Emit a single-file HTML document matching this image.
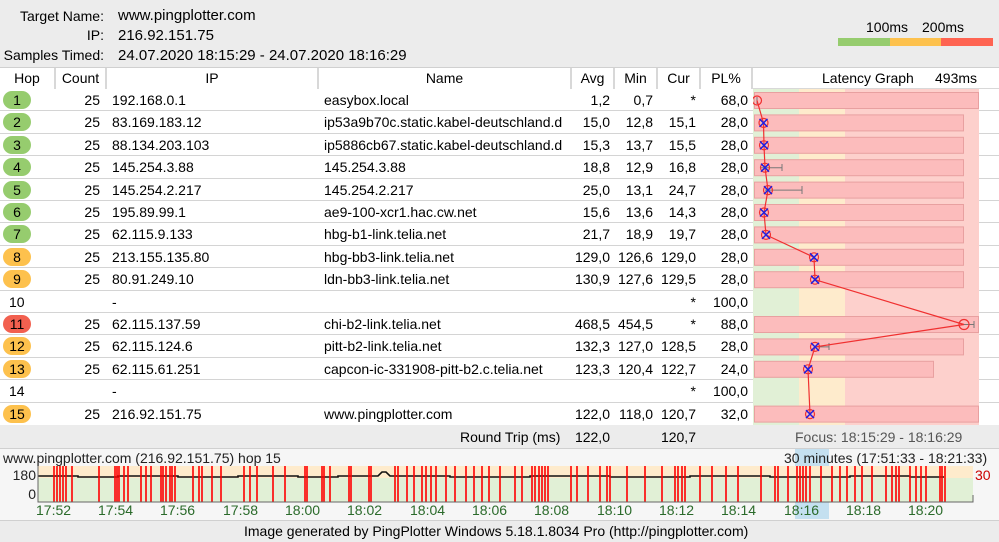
<!DOCTYPE html>
<html><head><meta charset="utf-8"><style>
*{margin:0;padding:0;box-sizing:border-box}
body{width:999px;height:542px;overflow:hidden;background:#ececec;font-family:"Liberation Sans",Verdana,sans-serif;font-size:14px;color:#000;position:relative}
.a{position:absolute;white-space:nowrap}
.r{text-align:right}
.row{position:absolute;left:0;width:999px;height:22.4px;background:#fff;border-bottom:1px solid #d4d4d4}
.row span{position:absolute;top:3px;white-space:nowrap}
.hop{position:absolute;left:3px;top:2px;width:28px;height:18px;border-radius:9px;text-align:center;line-height:18px}
.g{background:#96cc6e}.o{background:#fdc14d}.rd{background:#f2604f}
.hd{position:absolute;top:68px;height:21px;background:#fff;border-right:2px solid #d8d8d8;text-align:center;line-height:20px}
</style></head><body>
<div class="a r" style="left:0;width:104px;top:8px">Target Name:</div>
<div class="a" style="left:118px;top:7px;font-size:15px">www.pingplotter.com</div>
<div class="a r" style="left:0;width:104px;top:27px">IP:</div>
<div class="a" style="left:118px;top:27px;font-size:15px">216.92.151.75</div>
<div class="a r" style="left:0;width:104px;top:47px">Samples Timed:</div>
<div class="a" style="left:118px;top:47px;font-size:15px">24.07.2020 18:15:29 - 24.07.2020 18:16:29</div>
<div class="a" style="left:866px;top:19px">100ms</div><div class="a" style="left:922px;top:19px">200ms</div>
<div class="a" style="left:838px;top:38px;width:52px;height:8px;background:#96cc6e"></div>
<div class="a" style="left:890px;top:38px;width:51px;height:8px;background:#fdc14d"></div>
<div class="a" style="left:941px;top:38px;width:52px;height:8px;background:#fe6452"></div>
<div class="a" style="left:0;top:67px;width:999px;height:23px;background:#fff;border-top:1px solid #d0d0d0;border-bottom:2px solid #d8d8d8"></div>
<div class="hd" style="left:0;width:56px">Hop</div>
<div class="hd" style="left:56px;width:51px">Count</div>
<div class="hd" style="left:107px;width:212px">IP</div>
<div class="hd" style="left:319px;width:253px">Name</div>
<div class="hd" style="left:572px;width:43px">Avg</div>
<div class="hd" style="left:615px;width:43px">Min</div>
<div class="hd" style="left:658px;width:43px">Cur</div>
<div class="hd" style="left:701px;width:52px">PL%</div>
<div class="a" style="left:822px;top:70px">Latency Graph</div><div class="a" style="left:935px;top:70px">493ms</div>

<div class="row" style="top:89px"><div class="hop g">1</div><span class="r" style="right:899px">25</span><span style="left:112px">192.168.0.1</span><span style="left:324px">easybox.local</span><span class="r" style="right:389px">1,2</span><span class="r" style="right:346px">0,7</span><span class="r" style="right:303px">*</span><span class="r" style="right:251px">68,0</span></div>
<div class="row" style="top:111.4px"><div class="hop g">2</div><span class="r" style="right:899px">25</span><span style="left:112px">83.169.183.12</span><span style="left:324px">ip53a9b70c.static.kabel-deutschland.d</span><span class="r" style="right:389px">15,0</span><span class="r" style="right:346px">12,8</span><span class="r" style="right:303px">15,1</span><span class="r" style="right:251px">28,0</span></div>
<div class="row" style="top:133.8px"><div class="hop g">3</div><span class="r" style="right:899px">25</span><span style="left:112px">88.134.203.103</span><span style="left:324px">ip5886cb67.static.kabel-deutschland.d</span><span class="r" style="right:389px">15,3</span><span class="r" style="right:346px">13,7</span><span class="r" style="right:303px">15,5</span><span class="r" style="right:251px">28,0</span></div>
<div class="row" style="top:156.2px"><div class="hop g">4</div><span class="r" style="right:899px">25</span><span style="left:112px">145.254.3.88</span><span style="left:324px">145.254.3.88</span><span class="r" style="right:389px">18,8</span><span class="r" style="right:346px">12,9</span><span class="r" style="right:303px">16,8</span><span class="r" style="right:251px">28,0</span></div>
<div class="row" style="top:178.6px"><div class="hop g">5</div><span class="r" style="right:899px">25</span><span style="left:112px">145.254.2.217</span><span style="left:324px">145.254.2.217</span><span class="r" style="right:389px">25,0</span><span class="r" style="right:346px">13,1</span><span class="r" style="right:303px">24,7</span><span class="r" style="right:251px">28,0</span></div>
<div class="row" style="top:201px"><div class="hop g">6</div><span class="r" style="right:899px">25</span><span style="left:112px">195.89.99.1</span><span style="left:324px">ae9-100-xcr1.hac.cw.net</span><span class="r" style="right:389px">15,6</span><span class="r" style="right:346px">13,6</span><span class="r" style="right:303px">14,3</span><span class="r" style="right:251px">28,0</span></div>
<div class="row" style="top:223.4px"><div class="hop g">7</div><span class="r" style="right:899px">25</span><span style="left:112px">62.115.9.133</span><span style="left:324px">hbg-b1-link.telia.net</span><span class="r" style="right:389px">21,7</span><span class="r" style="right:346px">18,9</span><span class="r" style="right:303px">19,7</span><span class="r" style="right:251px">28,0</span></div>
<div class="row" style="top:245.8px"><div class="hop o">8</div><span class="r" style="right:899px">25</span><span style="left:112px">213.155.135.80</span><span style="left:324px">hbg-bb3-link.telia.net</span><span class="r" style="right:389px">129,0</span><span class="r" style="right:346px">126,6</span><span class="r" style="right:303px">129,0</span><span class="r" style="right:251px">28,0</span></div>
<div class="row" style="top:268.2px"><div class="hop o">9</div><span class="r" style="right:899px">25</span><span style="left:112px">80.91.249.10</span><span style="left:324px">ldn-bb3-link.telia.net</span><span class="r" style="right:389px">130,9</span><span class="r" style="right:346px">127,6</span><span class="r" style="right:303px">129,5</span><span class="r" style="right:251px">28,0</span></div>
<div class="row" style="top:290.6px"><span style="left:9px">10</span><span style="left:112px">-</span><span class="r" style="right:303px">*</span><span class="r" style="right:251px">100,0</span></div>
<div class="row" style="top:313px"><div class="hop rd">11</div><span class="r" style="right:899px">25</span><span style="left:112px">62.115.137.59</span><span style="left:324px">chi-b2-link.telia.net</span><span class="r" style="right:389px">468,5</span><span class="r" style="right:346px">454,5</span><span class="r" style="right:303px">*</span><span class="r" style="right:251px">88,0</span></div>
<div class="row" style="top:335.4px"><div class="hop o">12</div><span class="r" style="right:899px">25</span><span style="left:112px">62.115.124.6</span><span style="left:324px">pitt-b2-link.telia.net</span><span class="r" style="right:389px">132,3</span><span class="r" style="right:346px">127,0</span><span class="r" style="right:303px">128,5</span><span class="r" style="right:251px">28,0</span></div>
<div class="row" style="top:357.8px"><div class="hop o">13</div><span class="r" style="right:899px">25</span><span style="left:112px">62.115.61.251</span><span style="left:324px">capcon-ic-331908-pitt-b2.c.telia.net</span><span class="r" style="right:389px">123,3</span><span class="r" style="right:346px">120,4</span><span class="r" style="right:303px">122,7</span><span class="r" style="right:251px">24,0</span></div>
<div class="row" style="top:380.2px"><span style="left:9px">14</span><span style="left:112px">-</span><span class="r" style="right:303px">*</span><span class="r" style="right:251px">100,0</span></div>
<div class="row" style="top:402.6px;border-bottom:none"><div class="hop o">15</div><span class="r" style="right:899px">25</span><span style="left:112px">216.92.151.75</span><span style="left:324px">www.pingplotter.com</span><span class="r" style="right:389px">122,0</span><span class="r" style="right:346px">118,0</span><span class="r" style="right:303px">120,7</span><span class="r" style="right:251px">32,0</span></div>

<svg class="a" style="left:753px;top:89px" width="227" height="337" viewBox="753 89 227 337">
<rect x="753" y="89" width="46" height="337" fill="#e1f0d6"/>
<rect x="799" y="89" width="46" height="337" fill="#feebcc"/>
<rect x="845" y="89" width="134" height="337" fill="#fdd0cc"/>
<g fill="#fcbcbc" stroke="#e8a0a0">
<rect x="754.5" y="92.5" width="224" height="16"/>
<rect x="754.5" y="114.9" width="209" height="16"/>
<rect x="754.5" y="137.3" width="209" height="16"/>
<rect x="754.5" y="159.7" width="209" height="16"/>
<rect x="754.5" y="182.1" width="209" height="16"/>
<rect x="754.5" y="204.5" width="209" height="16"/>
<rect x="754.5" y="226.9" width="209" height="16"/>
<rect x="754.5" y="249.3" width="209" height="16"/>
<rect x="754.5" y="271.7" width="209" height="16"/>
<rect x="754.5" y="316.5" width="224" height="16"/>
<rect x="754.5" y="338.9" width="209" height="16"/>
<rect x="754.5" y="361.3" width="179" height="16"/>
<rect x="754.5" y="406.1" width="224" height="16"/>
</g>
<g stroke="#777" fill="none">
<path d="M761 167.7H782M782 164v7M765 190.1H802M802 186v8M963 324.5H974M974 321v7M815 346.9H829M829 343v7M757 97v7"/>
</g>
<polyline fill="none" stroke="#f03030" stroke-width="1.2" points="757,100.5 763.5,122.9 764,145.3 765,167.7 768,190.1 764,212.5 766,234.9 814,257.3 815,279.7 964,324.5 815,346.9 808,369.3 810,414.1"/>
<g fill="none" stroke="#f03030" stroke-width="1.2">
<circle cx="757" cy="100.5" r="4.5"/><circle cx="763.5" cy="122.9" r="4.5"/><circle cx="764" cy="145.3" r="4.5"/><circle cx="765" cy="167.7" r="4.5"/><circle cx="768" cy="190.1" r="4.5"/><circle cx="764" cy="212.5" r="4.5"/><circle cx="766" cy="234.9" r="4.5"/><circle cx="814" cy="257.3" r="4.5"/><circle cx="815" cy="279.7" r="4.5"/><circle cx="964" cy="324.5" r="5"/><circle cx="815" cy="346.9" r="4.5"/><circle cx="808" cy="369.3" r="4.5"/><circle cx="810" cy="414.1" r="4.5"/>
</g>
<g stroke="#2020e0" stroke-width="1.5">
<path d="M759.5 118.9l8 8m0-8l-8 8M760 141.3l8 8m0-8l-8 8M761 163.7l8 8m0-8l-8 8M764 186.1l8 8m0-8l-8 8M760 208.5l8 8m0-8l-8 8M762 230.9l8 8m0-8l-8 8M810 253.3l8 8m0-8l-8 8M811 275.7l8 8m0-8l-8 8M811 342.9l8 8m0-8l-8 8M804 365.3l8 8m0-8l-8 8M806 410.1l8 8m0-8l-8 8"/>
</g>
</svg>

<div class="a" style="left:0;top:425px;width:999px;height:24px;background:#ececec;border-bottom:1px solid #d0d0d0"></div>
<div class="a" style="left:460px;top:429px">Round Trip (ms)</div>
<div class="a r" style="right:389px;top:429px">122,0</div>
<div class="a r" style="right:303px;top:429px">120,7</div>
<div class="a" style="left:795px;top:429px;color:#555">Focus: 18:15:29 - 18:16:29</div>

<div class="a" style="left:0;top:449px;width:999px;height:71px;background:#f6f6f6"></div>
<div class="a" style="left:795px;top:449px;width:34px;height:70px;background:#c4e0f0"></div>
<div class="a" style="left:3px;top:450px;color:#222">www.pingplotter.com (216.92.151.75) hop 15</div>
<div class="a" style="left:784px;top:450px;color:#222">30 minutes (17:51:33 - 18:21:33)</div>
<div class="a r" style="left:0;width:36px;top:467px;color:#222">180</div>
<div class="a r" style="left:0;width:36px;top:486px;color:#222">0</div>
<div class="a" style="left:975px;top:467px;color:#c00">30</div>
<svg class="a" style="left:0;top:440px" width="999" height="80">
<rect x="38" y="26" width="935" height="12" fill="#feebcc"/>
<rect x="38" y="38" width="935" height="24" fill="#e1f0d6"/>
<path d="M38 36h40v1h40v-1h60v1h60v-1h60v1h40v-1h40l4-4h4l4 4h60v1h80v-1h80v1h80v-1h80v1h80v-1h60v1h34" fill="none" stroke="#111" stroke-width="1.6"/>
<g stroke="#f00" stroke-width="1.6">
<path d="M54 26V62M57 26V62M60 26V62M63 26V62M66 26V62M72 26V62M99 26V62M115 26V62M117 26V62M119 26V62M124 26V62M128 26V62M141 26V62M146 26V62M151 26V62M161 26V62M163 26V62M166 26V62M170 26V62M172 26V62M175 26V62M193 26V62M199 26V62M202 26V62M212 26V62M221 26V62M244 26V62M250 26V62M257 26V62M273 26V62M285 26V62M305 26V62M307 26V62M322 26V62M324 26V62M330 26V62M349 26V62M351 26V62M369 26V62M371 26V62M395 26V62M398 26V62M407 26V62M414 26V62M422 26V62M426 26V62M431 26V62M436 26V62M446 26V62M455 26V62M466 26V62M474 26V62M482 26V62M489 26V62M500 26V62M515 26V62M522 26V62M532 26V62M535 26V62M539 26V62M542 26V62M545 26V62M548 26V62M571 26V62M577 26V62M588 26V62M600 26V62M607 26V62M610 26V62M627 26V62M645 26V62M662 26V62M675 26V62M678 26V62M682 26V62M685 26V62M700 26V62M712 26V62M726 26V62M738 26V62M761 26V62M775 26V62M778 26V62M788 26V62M797 26V62M800 26V62M803 26V62M806 26V62M810 26V62M821 26V62M832 26V62M840 26V62M847 26V62M855 26V62M862 26V62M872 26V62M886 26V62M892 26V62M896 26V62M899 26V62M910 26V62M916 26V62M921 26V62M926 26V62M940 26V62M942 26V62M945 26V62"/>
</g>
<path d="M38 26V62H973V55" fill="none" stroke="#666"/>
</svg>
<div class="a" style="left:36px;top:502px;color:#2a6a2a;font-size:14px">
<span class="a" style="left:0">17:52</span><span class="a" style="left:62px">17:54</span><span class="a" style="left:124px">17:56</span><span class="a" style="left:187px">17:58</span><span class="a" style="left:249px">18:00</span><span class="a" style="left:311px">18:02</span><span class="a" style="left:374px">18:04</span><span class="a" style="left:436px">18:06</span><span class="a" style="left:498px">18:08</span><span class="a" style="left:561px">18:10</span><span class="a" style="left:623px">18:12</span><span class="a" style="left:685px">18:14</span><span class="a" style="left:748px">18:16</span><span class="a" style="left:810px">18:18</span><span class="a" style="left:872px">18:20</span></div>
<div class="a" style="left:0;top:520px;width:999px;height:22px;background:#ececec;border-top:1px solid #d0d0d0"></div>
<div class="a" style="left:244px;top:523px">Image generated by PingPlotter Windows 5.18.1.8034 Pro (http://pingplotter.com)</div>
</body></html>
